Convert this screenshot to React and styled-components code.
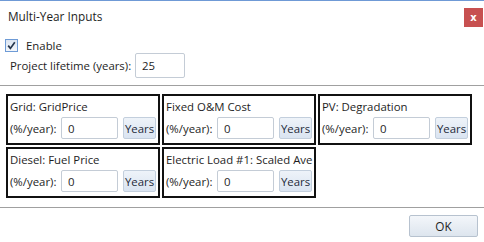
import React, { useState } from 'react';
import styled, { createGlobalStyle } from 'styled-components';

const GlobalStyle = createGlobalStyle`
  html, body {
    margin: 0;
    padding: 0;
    background: #fff;
  }
  body {
    font-family: 'Open Sans', 'Noto Sans', sans-serif;
    font-size: 11.4px;
    color: #1e1e1e;
  }
`;

const Window = styled.div`
  width: 484px;
  height: 242px;
  box-sizing: border-box;
  border-top: 1px solid #6f9ad6;
  background: #fff;
  display: flex;
  flex-direction: column;
`;

const TitleBar = styled.div`
  height: 30px;
  flex: none;
  display: flex;
  align-items: center;
  justify-content: space-between;
  padding: 0 1px 0 8px;
  font-size: 11.8px;
`;

const CloseButton = styled.button`
  width: 19px;
  height: 19px;
  border: none;
  padding: 0;
  margin-top: 3px;
  background: #c75050;
  color: #fff;
  font: bold 10px 'DejaVu Sans', sans-serif;
  line-height: 19px;
`;

const TopSection = styled.div`
  flex: none;
  box-sizing: border-box;
  height: 55px;
  padding: 8px 0 0 5px;
  display: flex;
  flex-direction: column;
  gap: 1px;
  border-bottom: 1px solid #a0a0a0;
`;

const CheckRow = styled.label`
  display: flex;
  align-items: center;
  gap: 8px;
  height: 13px;
`;

const CheckBox = styled.span`
  box-sizing: border-box;
  width: 13px;
  height: 13px;
  border: 1px solid #6e9bd6;
  background: linear-gradient(#dce5f1, #f4f7fb);
  display: flex;
  align-items: center;
  justify-content: center;
`;

const FieldRow = styled.div`
  display: flex;
  align-items: center;
  gap: 6px;
  padding-left: 5px;
`;

const Label = styled.span`
  width: ${(p) => p.$w}px;
  white-space: nowrap;
`;

const TextInput = styled.input`
  box-sizing: border-box;
  width: ${(p) => p.$w || 57}px;
  height: ${(p) => p.$h || 22}px;
  border: 1px solid #c4ccd6;
  border-radius: 2px;
  padding: 0 0 0 6px;
  font: inherit;
  color: #1e1e1e;
  outline: none;
`;

const Grid = styled.div`
  flex: none;
  display: grid;
  grid-template-columns: repeat(3, 154px);
  grid-auto-rows: 51px;
  gap: 2px 2px;
  padding: 8px 0 0 6px;
  height: 122px;
  box-sizing: border-box;
  border-bottom: 1px solid #a0a0a0;
`;

const Card = styled.div`
  border: 2px solid #111;
  box-sizing: border-box;
  padding: 3px 0 0 2px;
  display: flex;
  flex-direction: column;
  gap: 3px;
  overflow: hidden;
  white-space: nowrap;
`;

const CardTitle = styled.div`
  height: 15px;
  line-height: 15px;
  overflow: hidden;
`;

const CardRow = styled.div`
  display: flex;
  align-items: center;
  gap: 4px;
`;

const YearsButton = styled.button`
  box-sizing: border-box;
  width: 33px;
  height: 22px;
  margin-left: 1px;
  padding: 0;
  border: 1px solid #c3cfdd;
  border-radius: 2px;
  background: linear-gradient(#eef3f9, #dae4f1);
  font: inherit;
  color: #1e2a3a;
`;

const Footer = styled.div`
  display: flex;
  justify-content: flex-end;
  padding: 7px 6px 0 0;
`;

const OkButton = styled.button`
  width: 69px;
  height: 22px;
  border: 1px solid #b7c2cf;
  border-radius: 2px;
  background: linear-gradient(#f3f6fa, #dde5ee);
  font: inherit;
  font-size: 11.8px;
  color: #1e1e1e;
`;

const inputs = [
  'Grid: GridPrice',
  'Fixed O&M Cost',
  'PV: Degradation',
  'Diesel: Fuel Price',
  'Electric Load #1: Scaled Ave',
];

const Check = () => (
  <svg width="9" height="9" viewBox="0 0 9 9">
    <path d="M1.2 4.6 L3.4 7.4 L7.8 1.2" fill="none" stroke="#26364d" strokeWidth="1.7" />
  </svg>
);

export default function App() {
  const [life, setLife] = useState('25');
  return (
    <Window>
      <GlobalStyle />
      <TitleBar>
        <span>Multi-Year Inputs</span>
        <CloseButton>x</CloseButton>
      </TitleBar>
      <TopSection>
        <CheckRow>
          <CheckBox>
            <Check />
          </CheckBox>
          Enable
        </CheckRow>
        <FieldRow>
          <Label $w={119}>Project lifetime (years):</Label>
          <TextInput $w={50} $h={25} value={life} onChange={(e) => setLife(e.target.value)} />
        </FieldRow>
      </TopSection>
      <Grid>
        {inputs.map((name) => (
          <Card key={name}>
            <CardTitle>{name}</CardTitle>
            <CardRow>
              <Label $w={47}>(%/year):</Label>
              <TextInput defaultValue="0" />
              <YearsButton>Years</YearsButton>
            </CardRow>
          </Card>
        ))}
      </Grid>
      <Footer>
        <OkButton>OK</OkButton>
      </Footer>
    </Window>
  );
}
